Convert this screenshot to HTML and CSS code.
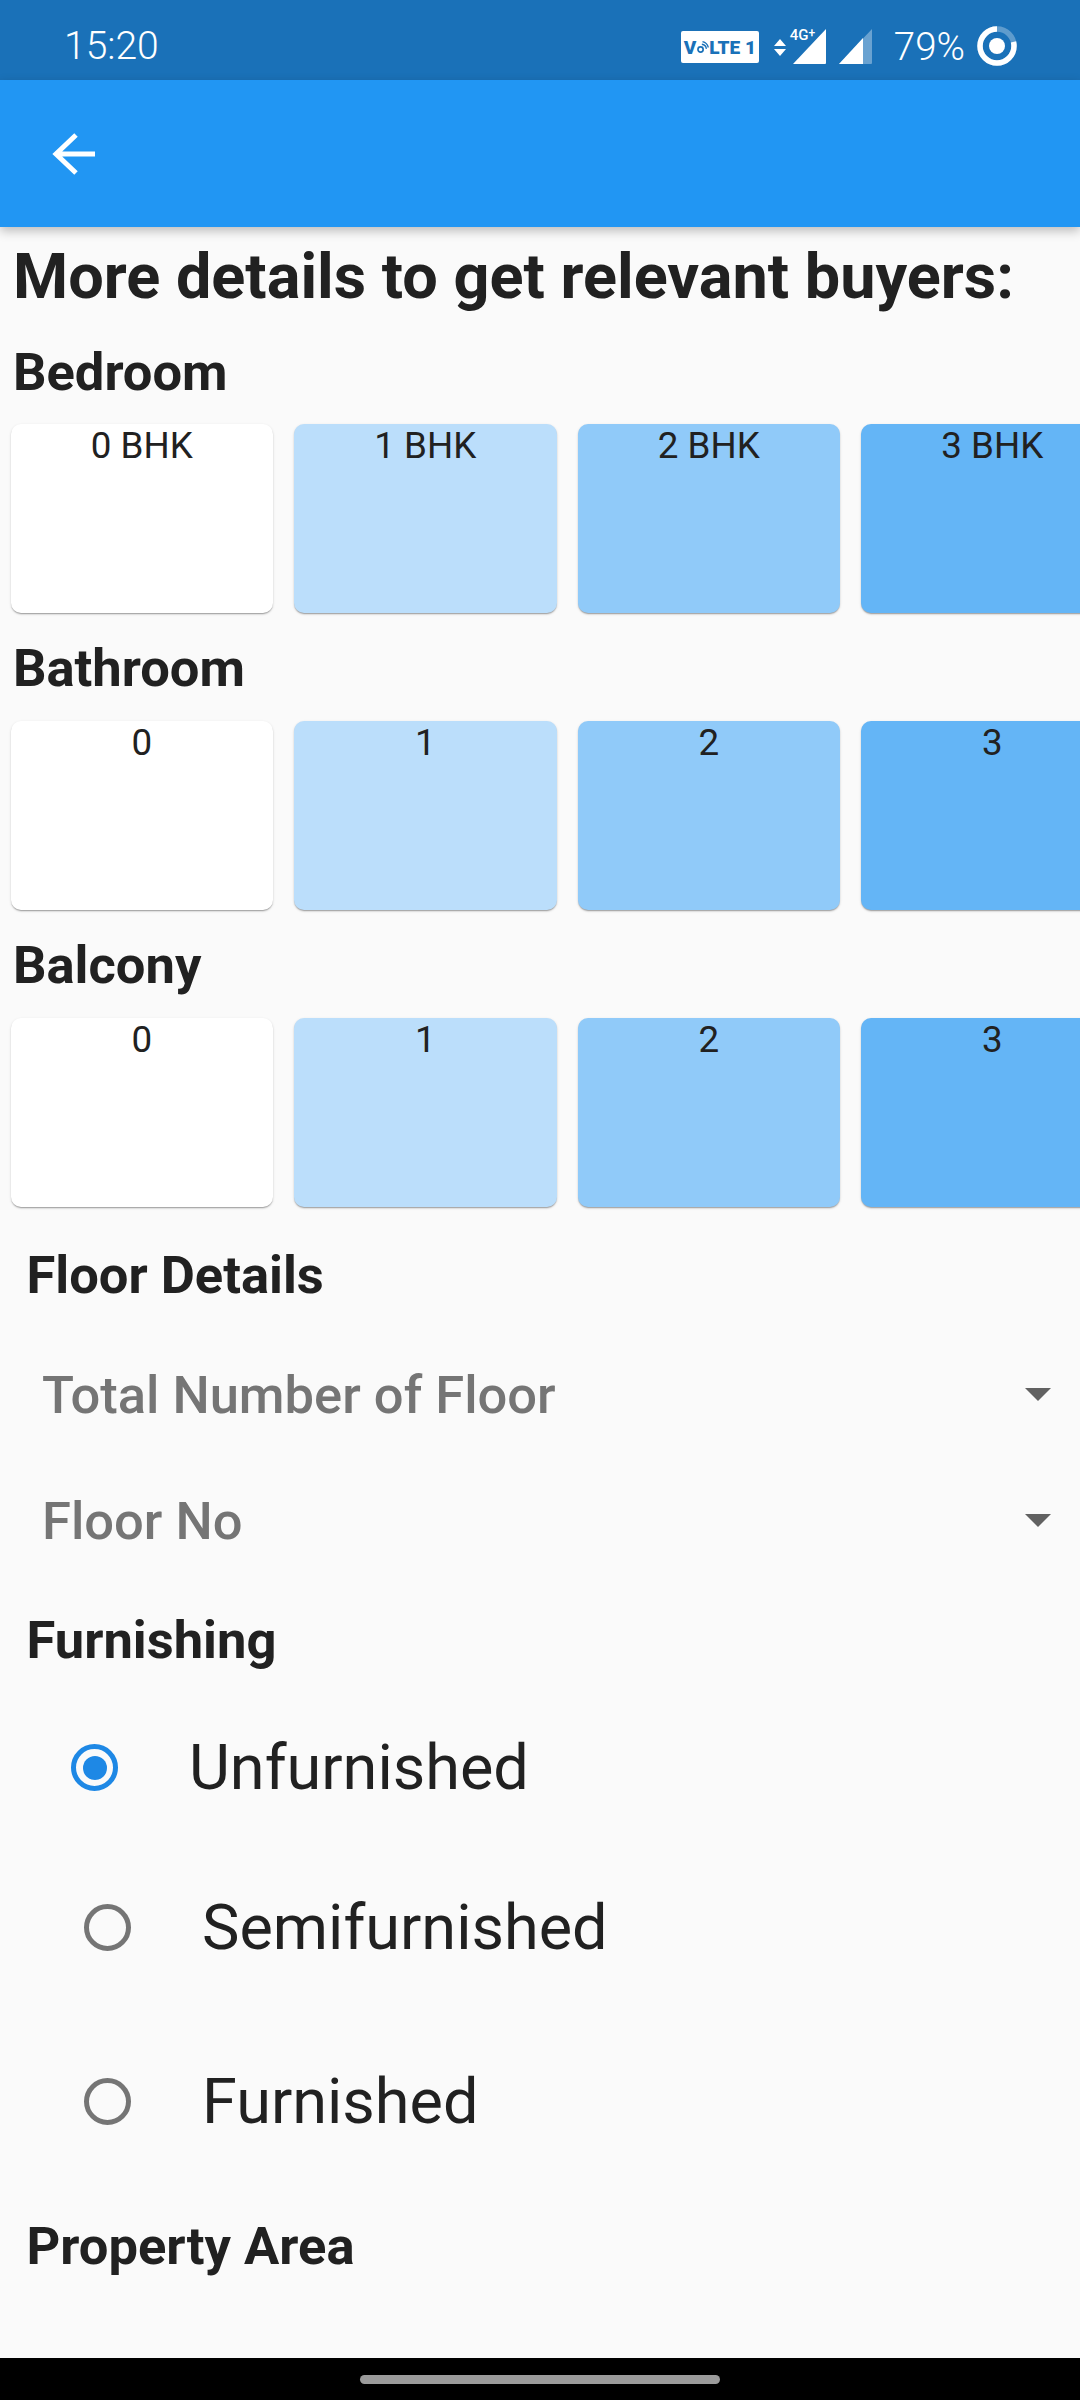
FILE: index.html
```html
<!DOCTYPE html>
<html lang="en">
<head>
<meta charset="utf-8">
<title>Property details</title>
<link rel="stylesheet" href="styles.css">
</head>
<body>
<div class="screen">
  <div class="status">
    <span class="time">15:20</span>
    <div class="status-right">
      <span class="volte">V<svg class="volte-wifi" viewBox="0 0 20 20"><circle cx="7" cy="13" r="4" fill="none" stroke="#1A71B8" stroke-width="2.6"/><path d="M9 5a8 8 0 0 1 7 7M10 1a12 12 0 0 1 9 9" fill="none" stroke="#1A71B8" stroke-width="2"/></svg>LTE 1</span>
      <svg class="updown" viewBox="0 0 12 17"><path d="M6 0l6 7H0zM6 17l6-7H0z" fill="#fff"/></svg>
      <span class="sig-wrap"><span class="fourg">4G<sup>+</sup></span><svg class="sig" viewBox="0 0 35 35"><path d="M34 0v34q0 1-1 1H1z" fill="#fff"/></svg></span>
      <svg class="sig sig2" viewBox="0 0 35 35"><path d="M34 0v34q0 1-1 1H1z" fill="#fff" opacity=".35"/><path d="M25 9v26H1z" fill="#fff"/></svg>
      <span class="batt">79%</span>
      <svg class="ring" viewBox="0 0 40 40"><circle cx="20" cy="20" r="17" fill="none" stroke="#fff" stroke-width="5.5" opacity=".3"/><circle cx="20" cy="20" r="17" fill="none" stroke="#fff" stroke-width="5.5" pathLength="100" stroke-dasharray="79 21" transform="rotate(-90 20 20) scale(1 -1) translate(0 -40)"/><circle cx="20" cy="20" r="8" fill="#fff"/></svg>
    </div>
  </div>
  <header class="appbar">
    <svg class="back" viewBox="0 0 44 44"><path d="M43 22H4M24 3 4 22l20 19" fill="none" stroke="#fff" stroke-width="5"/></svg>
  </header>
  <main class="content">
    <h1 class="title">More details to get relevant buyers:</h1>

    <h2 class="sec">Bedroom</h2>
    <div class="tiles tiles-first">
      <div class="tile t0">0 BHK</div><div class="tile t1">1 BHK</div><div class="tile t2">2 BHK</div><div class="tile t3">3 BHK</div>
    </div>
    <h2 class="sec">Bathroom</h2>
    <div class="tiles">
      <div class="tile t0">0</div><div class="tile t1">1</div><div class="tile t2">2</div><div class="tile t3">3</div>
    </div>
    <h2 class="sec">Balcony</h2>
    <div class="tiles">
      <div class="tile t0">0</div><div class="tile t1">1</div><div class="tile t2">2</div><div class="tile t3">3</div>
    </div>

    <h2 class="sub sub-floor">Floor Details</h2>
    <div class="drop drop-a"><span>Total Number of Floor</span><i class="caret"></i></div>
    <div class="drop"><span>Floor No</span><i class="caret"></i></div>

    <h2 class="sub sub-furn">Furnishing</h2>
    <div class="radio first"><i class="dot on"></i><span>Unfurnished</span></div>
    <div class="radio second"><i class="dot"></i><span>Semifurnished</span></div>
    <div class="radio third"><i class="dot"></i><span>Furnished</span></div>

    <h2 class="sub sub-area">Property Area</h2>
  </main>
  <div class="nav"><span class="pill"></span></div>
</div>
</body>
</html>
```
FILE: styles.css
```css
* { box-sizing: border-box; }
html, body { margin: 0; padding: 0; }
body { width: 1080px; height: 2400px; overflow: hidden; font-family: Roboto, sans-serif; background: #fafafa; color: #212121; }
.screen { width: 1080px; height: 2400px; display: flex; flex-direction: column; overflow: hidden; }
.status { height: 80px; flex: none; background: #1a71b8; color: #fff; display: flex; align-items: center; justify-content: space-between; padding: 12px 63px 0 64px; }
.time { font-size: 39px; font-weight: 300; }
.status-right { display: flex; align-items: center; }
.volte { width: 78px; height: 32px; margin-top: 2px; background: #fff; border-radius: 2px; color: #1a71b8; font-size: 19px; font-weight: 900; display: flex; align-items: center; justify-content: center; white-space: nowrap; margin-right: 15px; }
.volte-wifi { width: 13px; height: 13px; }
.updown { width: 12px; height: 17px; margin-right: 6px; margin-top: 2px; }
.sig-wrap { position: relative; display: flex; margin-right: 11px; }
.fourg { position: absolute; left: -2px; top: -2px; font-size: 15px; font-weight: 500; color: #fff; line-height: 16px; white-space: nowrap; }
.fourg sup { font-size: 12px; line-height: 0; vertical-align: 3px; }
.sig { width: 35px; height: 35px; display: block; }
.sig2 { margin-right: 21px; }
.batt { font-size: 38.500px; font-weight: 300; margin-right: 12px; }
.ring { width: 40px; height: 40px; }
.appbar { height: 147px; flex: none; background: #2196f3; display: flex; align-items: center; padding-left: 52px; box-shadow: 0 4px 10px rgba(0,0,0,.25); position: relative; }
.back { width: 44px; height: 44px; }
.content { flex: 1; padding: 0; overflow: hidden; }
.title { margin: 0; padding: 13px 0 0 13px; font-size: 63px; line-height: 74px; font-weight: 700; white-space: nowrap; }
.sec { margin: 0; padding-left: 13px; font-size: 52.5px; line-height: 62px; font-weight: 700; }
.title + .sec { margin-top: 27px; }
.tiles { display: flex; gap: 21px; padding: 22px 0 0 10.500px; margin-bottom: 24px; width: 1200px; }
.tiles-first { padding-top: 21px; }
.tile { width: 262.500px; height: 189px; flex: none; border-radius: 10px; box-shadow: 0 2px 2px -1px rgba(0,0,0,.2), 0 1px 1px rgba(0,0,0,.14), 0 1px 3px rgba(0,0,0,.12); text-align: center; font-size: 36.750px; line-height: 44px; }
.t0 { background: #fff; }
.t1 { background: #bbdefb; }
.t2 { background: #90caf9; }
.t3 { background: #64b5f6; }
.sub { margin: 0; padding-left: 26.500px; font-size: 52.5px; line-height: 62px; font-weight: 700; }
.sub-floor { margin-top: 37px; }
.drop { height: 126px; display: flex; align-items: center; justify-content: space-between; padding: 0 29px 0 42px; font-size: 52.5px; font-weight: 500; color: #757575; }
.drop-a { margin-top: 25.500px; }
.caret { width: 0; height: 0; border-left: 13px solid transparent; border-right: 13px solid transparent; border-top: 13px solid #616161; }
.sub-furn { margin-top: 25px; }
.radio { display: flex; align-items: center; font-size: 63px; }
.radio span { line-height: 74px; }
.dot { width: 47px; height: 47px; border-radius: 50%; border: 5px solid #757575; flex: none; }
.dot.on { border-color: #1e88e5; position: relative; }
.dot.on::after { content: ""; position: absolute; inset: 6.500px; border-radius: 50%; background: #1e88e5; }
.first { padding-left: 71px; gap: 71px; margin-top: 60px; }
.second { padding-left: 84px; gap: 71px; margin-top: 86px; }
.third { padding-left: 84px; gap: 71px; margin-top: 100px; }
.sub-area { margin-top: 76px; }
.nav { height: 42px; flex: none; background: #000; position: relative; }
.pill { position: absolute; left: 360px; top: 17px; width: 360px; height: 9px; border-radius: 5px; background: #9b9b9b; }
```
